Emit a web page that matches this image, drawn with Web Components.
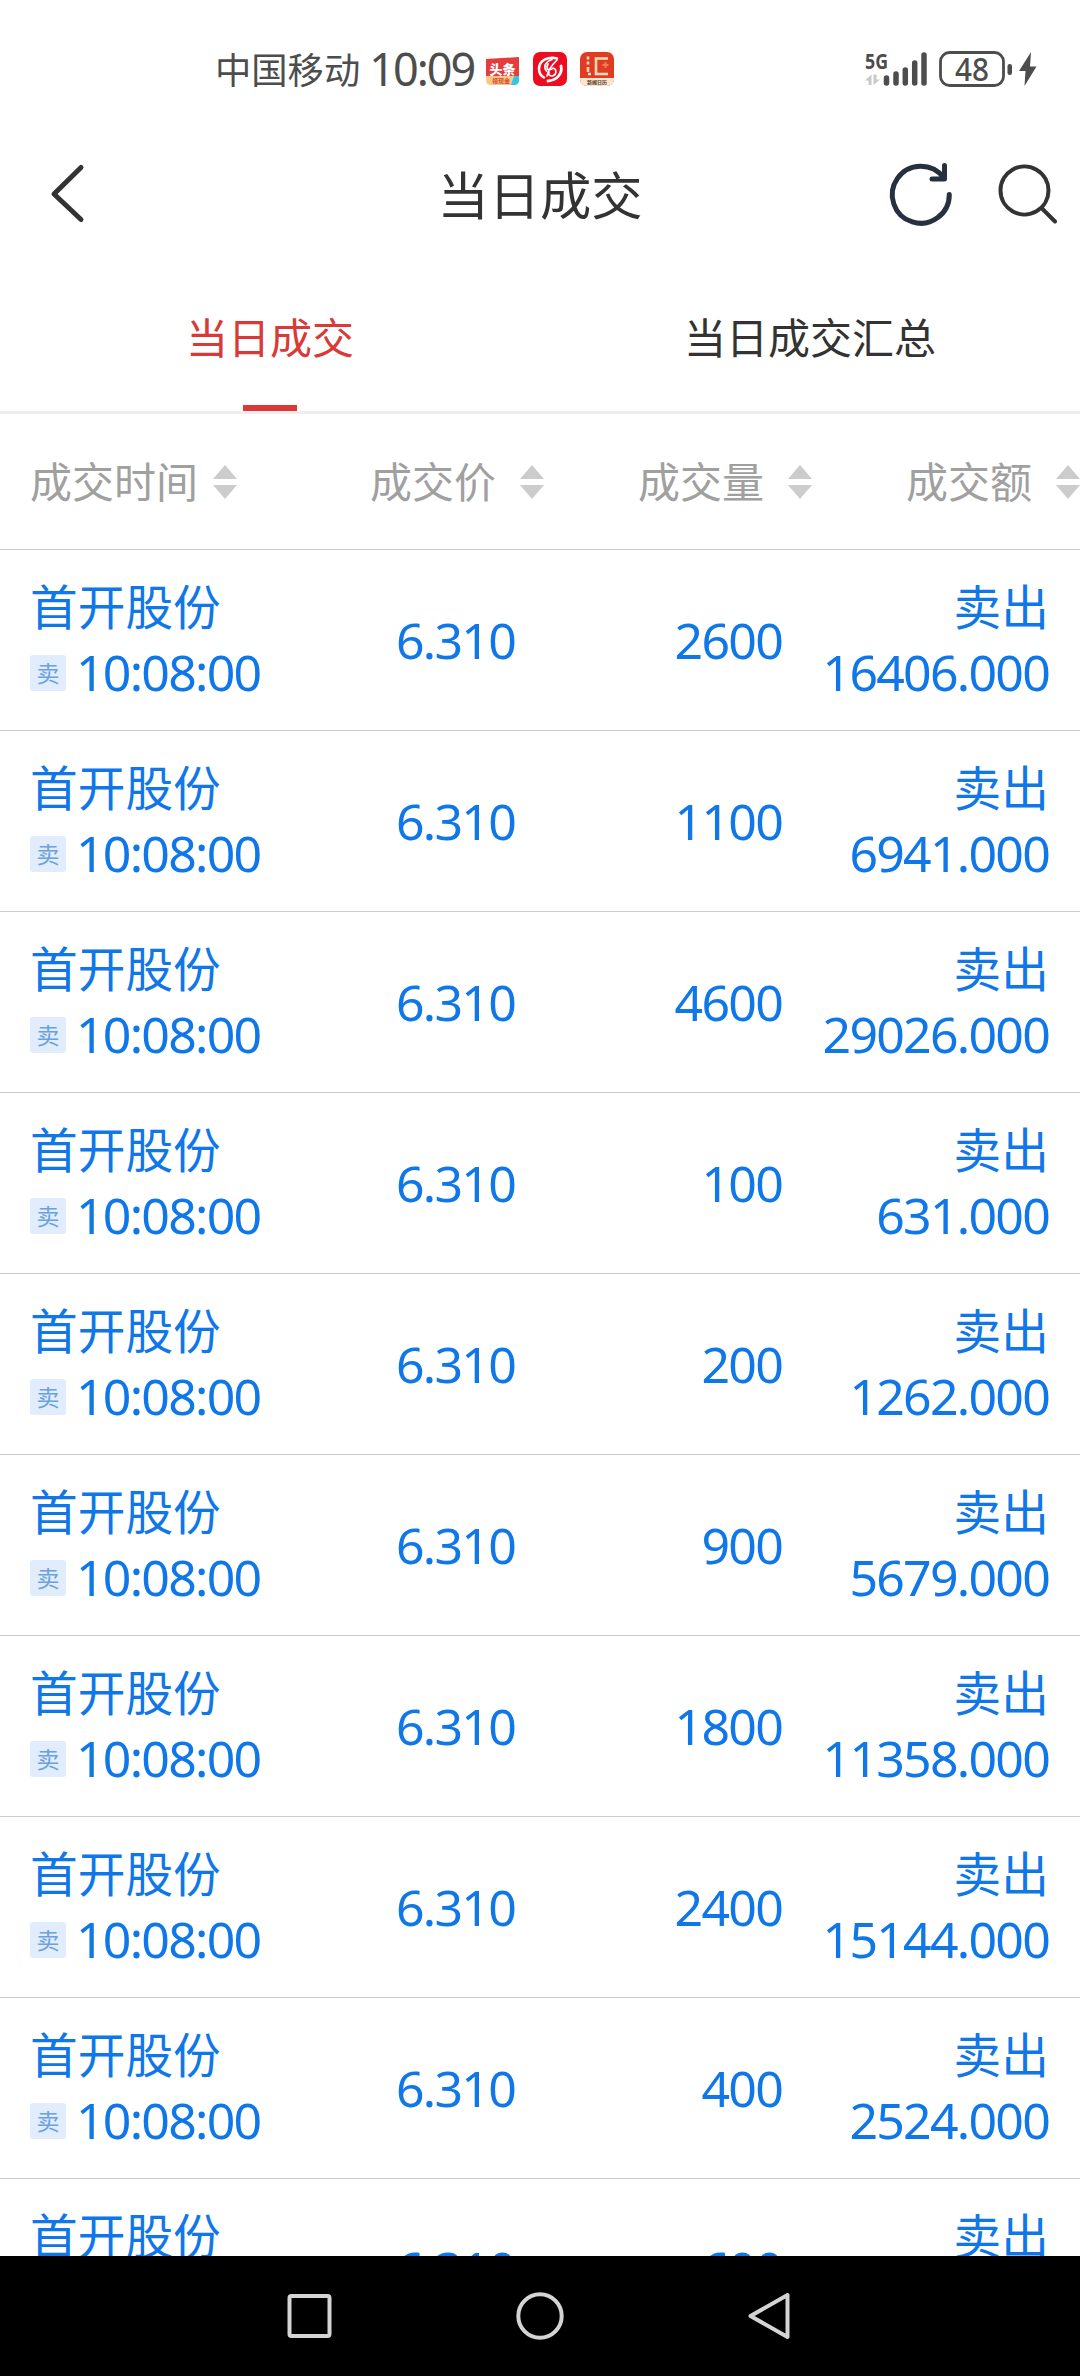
<!DOCTYPE html>
<html lang="zh-CN">
<head>
<meta charset="utf-8">
<title>当日成交</title>
<style>
    body{
        margin: 0;
        background: #fff;
        font-family: "Noto Sans", "Noto Sans CJK SC", sans-serif;
    }
</style>
</head>
<body>
<trade-app></trade-app>
<script>
class StatusBar extends HTMLElement{
    constructor(){
        super();
        this.attachShadow({mode: "open"});
    }
    connectedCallback(){
        this.shadowRoot.innerHTML = `
        <style>
            :host{
                display: flex;
                align-items: center;
                box-sizing: border-box;
                height: 138px;
                padding: 0 40px 0 215px;
                color: #4d4d4d;
            }
            .carrier{
                font-size: 36.3px;
                line-height: 54px;
                padding-bottom: 3px;
                font-family: "Noto Sans CJK SC", sans-serif;
            }
            .time{
                font-size: 45px;
                line-height: 54px;
                letter-spacing: -2px;
                margin-left: 9px;
                width: 107px;
            }
            .apps{
                display: flex;
                gap: 13px;
                margin-left: 10px;
                flex: 1;
            }
            svg{
                display: block;
            }
            .signal{
                margin-top: 3px;
            }
        </style>
        <span class="carrier">${this.getAttribute("carrier")}</span>
        <span class="time">${this.getAttribute("time")}</span>
        <div class="apps">
            <svg width="34" height="34" viewBox="0 0 34 34">
                <path d="M0 7 L33 5 V24 H0Z" fill="#e63d3c"/>
                <path d="M0 24 H33 V28 Q33 33 28 33 H5 Q0 33 0 28Z" fill="#f6c987"/>
                <path d="M25 33 L28 24 H33 V28 Q33 33 28 33Z" fill="#32c5e8"/>
                <text x="16.500" y="21.500" font-size="13" font-weight="900" text-anchor="middle" fill="#fff" font-family="Noto Sans CJK SC">头条</text>
                <text x="15" y="31.200" font-size="6" font-weight="700" text-anchor="middle" fill="#d8492f" font-family="Noto Sans CJK SC">领现金</text>
            </svg>
            <svg width="34" height="34" viewBox="0 0 34 34">
                <rect width="34" height="34" rx="7" fill="#ec0d20"/>
                <g fill="none" stroke="#fff" stroke-linecap="round">
                    <path d="M24 6.500 C16 4 6 8 6 17 C6 21 8 24 11 25.500" stroke-width="2.500"/>
                    <path d="M28 14 C29.500 21 25 28 15 29" stroke-width="2.800"/>
                    <path d="M19 7.500 C12 10 10 15 13.500 19 M24 8 C20 12 15 17 14 24 M15 12 C13 16 14 19 19 17 M20 16 C24 17 24 23 19 24 C16 24 15 22 16 20" stroke-width="1.700"/>
                </g>
            </svg>
            <svg width="34" height="34" viewBox="0 0 34 34">
                <rect width="34" height="34" rx="7" fill="#e03c24"/>
                <path d="M0 26 H34 V27 Q34 34 27 34 H7 Q0 34 0 27Z" fill="#f9e6cf"/>
                <path d="M28 6.500 H16 V22 H28" fill="none" stroke="#f8d9b3" stroke-width="2.600"/>
                <path d="M8 4.500 V7.500 M8 9.500 V12.500 M8 15 V20 M8 22 H11" stroke="#f8d9b3" stroke-width="2.600"/>
                <path d="M25.500 10 V16 M22.500 13 H28.500" stroke="#f27b57" stroke-width="2"/>
                <text x="17" y="32" font-size="5" font-weight="700" text-anchor="middle" fill="#5e3425" font-family="Noto Sans CJK SC">新闻日历</text>
            </svg>
        </div>
        <svg class="signal" width="175" height="40" viewBox="0 0 175 40">
            <text x="0" y="18" font-size="22" font-weight="700" textLength="23" lengthAdjust="spacingAndGlyphs" fill="#4d4d4d" font-family="Noto Sans">5G</text>
            <g fill="#c9c9c9">
                <path d="M0 29.500 L6.500 23.500 V34 H3.500 V29.500Z"/>
                <path d="M8.500 23.500 H11.500 V28.500 H15 L8.500 34Z"/>
            </g>
            <g stroke="#4d4d4d" stroke-width="5.500" stroke-linecap="round">
                <path d="M21.500 27 V32 M31 23 V32 M40.300 19 V32 M49.700 12 V32 M59 4 V32"/>
            </g>
            <rect x="75.500" y="1.500" width="63" height="33" rx="9" fill="none" stroke="#4d4d4d" stroke-width="2.800"/>
            <text x="90" y="29.500" font-size="32.500" font-weight="500" textLength="34" lengthAdjust="spacingAndGlyphs" fill="#4d4d4d" font-family="Noto Sans">48</text>
            <rect x="142.500" y="13" width="4.500" height="11" rx="2.200" fill="#4d4d4d"/>
            <path d="M166 1 L154 20 H160.500 L159.500 35 L171.500 15.500 H165Z" fill="#4d4d4d"/>
        </svg>
        `;
    }
}
customElements.define("status-bar", StatusBar);

class TitleBar extends HTMLElement{
    constructor(){
        super();
        this.attachShadow({mode: "open"});
    }
    connectedCallback(){
        this.shadowRoot.innerHTML = `
        <style>
            :host{
                display: grid;
                grid-template-columns: 250px 1fr 250px;
                align-items: center;
                height: 114px;
                color: #333;
            }
            h1{
                margin: 0 0 4px;
                font-size: 51.3px;
                line-height: 70px;
                font-weight: 400;
                text-align: center;
                font-family: "Noto Sans CJK SC", sans-serif;
            }
            svg{
                display: block;
                fill: none;
                stroke-linecap: round;
                stroke-linejoin: round;
            }
        </style>
        <svg width="250" height="114" viewBox="0 138 250 114" stroke="#333" stroke-width="5">
            <path d="M81 167.500 L54 194 L81 219.500"/>
        </svg>
        <h1><slot></slot></h1>
        <svg width="250" height="114" viewBox="830 138 250 114" stroke-width="5">
            <path d="M949.300 194.500 A28.500 28.500 0 1 1 943.500 177.500 M944.500 165.500 V179 H932" stroke="#27303f"/>
            <path d="M1048.500 190.500 A24 24 0 1 1 1048.500 190.400 M1041.500 208 L1055 221.500" stroke="#333" stroke-width="4"/>
        </svg>
        `;
    }
}
customElements.define("title-bar", TitleBar);

class TabItem extends HTMLElement{
    constructor(){
        super();
        this.attachShadow({mode: "open"});
    }
    connectedCallback(){
        this.shadowRoot.innerHTML = `
        <style>
            :host{
                display: flex;
                flex-direction: column;
                align-items: center;
                flex: 1;
                height: 159px;
                color: #333;
                font-size: 42px;
                line-height: 60px;
                font-family: "Noto Sans CJK SC", sans-serif;
            }
            :host([active]){
                color: #d93a37;
            }
            span{
                margin-top: 54px;
                flex: 1;
            }
            i{
                width: 54px;
                height: 6px;
            }
            :host([active]) i{
                background: #d93a37;
            }
        </style>
        <span><slot></slot></span>
        <i></i>
        `;
    }
}
customElements.define("tab-item", TabItem);

class SortHead extends HTMLElement{
    constructor(){
        super();
        this.attachShadow({mode: "open"});
    }
    connectedCallback(){
        this.shadowRoot.innerHTML = `
        <style>
            :host{
                display: flex;
                align-items: center;
                gap: var(--sort-gap, 24px);
                color: #a0a0a0;
                font-size: 42px;
                line-height: 60px;
                white-space: nowrap;
                font-family: "Noto Sans CJK SC", sans-serif;
            }
            span{
                padding-bottom: 4px;
            }
            svg{
                display: block;
                flex: none;
            }
        </style>
        <span><slot></slot></span>
        <svg width="24" height="34" viewBox="0 0 24 34" fill="#ccc">
            <path d="M12 0 L24 14 H0Z M0 20 H24 L12 34Z"/>
        </svg>
        `;
    }
}
customElements.define("sort-head", SortHead);

class TradeRow extends HTMLElement{
    constructor(){
        super();
        this.attachShadow({mode: "open"});
    }
    connectedCallback(){
        this.shadowRoot.innerHTML = `
        <style>
            :host{
                display: grid;
                grid-template-columns: 269px 216px 267px 267px;
                align-items: center;
                flex: none;
                box-sizing: border-box;
                height: 181px;
                padding-left: 30px;
                border-bottom: 1px solid #ccc;
                color: #0f77e8;
                font-size: 50px;
                line-height: 65px;
                letter-spacing: -1.75px;
                white-space: nowrap;
            }
            .name{
                padding-bottom: 6px;
                font-size: 47.7px;
                line-height: 59px;
                letter-spacing: 0;
                font-family: "Noto Sans CJK SC", sans-serif;
            }
            .when{
                display: flex;
                align-items: center;
            }
            .badge{
                width: 36px;
                height: 36px;
                margin-right: 10px;
                border-radius: 3px;
                background: #e1edfc;
                color: #6ba1dd;
                font-size: 23px;
                line-height: 35px;
                letter-spacing: 0;
                text-align: center;
                font-family: "Noto Sans CJK SC", sans-serif;
            }
            .num{
                text-align: right;
            }
        </style>
        <div>
            <div class="name">${this.getAttribute("name")}</div>
            <div class="when"><span class="badge">卖</span><span>${this.getAttribute("time")}</span></div>
        </div>
        <div class="num">${this.getAttribute("price")}</div>
        <div class="num">${this.getAttribute("count")}</div>
        <div class="num">
            <div class="name">卖出</div>
            <div>${this.getAttribute("amount")}</div>
        </div>
        `;
    }
}
customElements.define("trade-row", TradeRow);

class NavKeys extends HTMLElement{
    constructor(){
        super();
        this.attachShadow({mode: "open"});
    }
    connectedCallback(){
        this.shadowRoot.innerHTML = `
        <style>
            :host{
                display: flex;
                align-items: center;
                justify-content: center;
                gap: 180px;
                height: 120px;
                background: #000;
            }
            svg{
                display: block;
                fill: none;
                stroke: #d4d4d4;
                stroke-width: 4;
                stroke-linejoin: round;
            }
        </style>
        <svg width="50" height="50"><rect x="4.500" y="5" width="40" height="40" rx="2"/></svg>
        <svg width="50" height="50"><circle cx="25" cy="25" r="21.700"/></svg>
        <svg width="50" height="50"><path d="M42.500 4 V46 L5.500 25Z"/></svg>
        `;
    }
}
customElements.define("nav-keys", NavKeys);

const trades = [
    ["2600", "16406.000"],
    ["1100", "6941.000"],
    ["4600", "29026.000"],
    ["100", "631.000"],
    ["200", "1262.000"],
    ["900", "5679.000"],
    ["1800", "11358.000"],
    ["2400", "15144.000"],
    ["400", "2524.000"],
    ["600", "3786.000"]
];

class TradeApp extends HTMLElement{
    constructor(){
        super();
        this.attachShadow({mode: "open"});
    }
    connectedCallback(){
        const rows = trades.map(([count, amount]) => `
            <trade-row name="首开股份" time="10:08:00" price="6.310" count="${count}" amount="${amount}"></trade-row>`).join("");
        this.shadowRoot.innerHTML = `
        <style>
            :host{
                display: flex;
                flex-direction: column;
                width: 1080px;
                height: 2376px;
                overflow: hidden;
            }
            .tabs{
                display: flex;
                border-bottom: 3px solid #eee;
            }
            .heads{
                display: grid;
                grid-template-columns: 340px 268px 268px 1fr;
                align-items: center;
                box-sizing: border-box;
                height: 136px;
                padding-left: 30px;
                border-bottom: 1px solid #ccc;
            }
            .heads sort-head:first-child{
                --sort-gap: 15px;
            }
            .list{
                display: flex;
                flex-direction: column;
                flex: 1;
                min-height: 0;
                overflow: hidden;
            }
        </style>
        <status-bar carrier="中国移动" time="10:09"></status-bar>
        <title-bar>当日成交</title-bar>
        <div class="tabs">
            <tab-item active>当日成交</tab-item>
            <tab-item>当日成交汇总</tab-item>
        </div>
        <div class="heads">
            <sort-head>成交时间</sort-head>
            <sort-head>成交价</sort-head>
            <sort-head>成交量</sort-head>
            <sort-head>成交额</sort-head>
        </div>
        <div class="list">${rows}
        </div>
        <nav-keys></nav-keys>
        `;
    }
}
customElements.define("trade-app", TradeApp);
</script>
</body>
</html>
